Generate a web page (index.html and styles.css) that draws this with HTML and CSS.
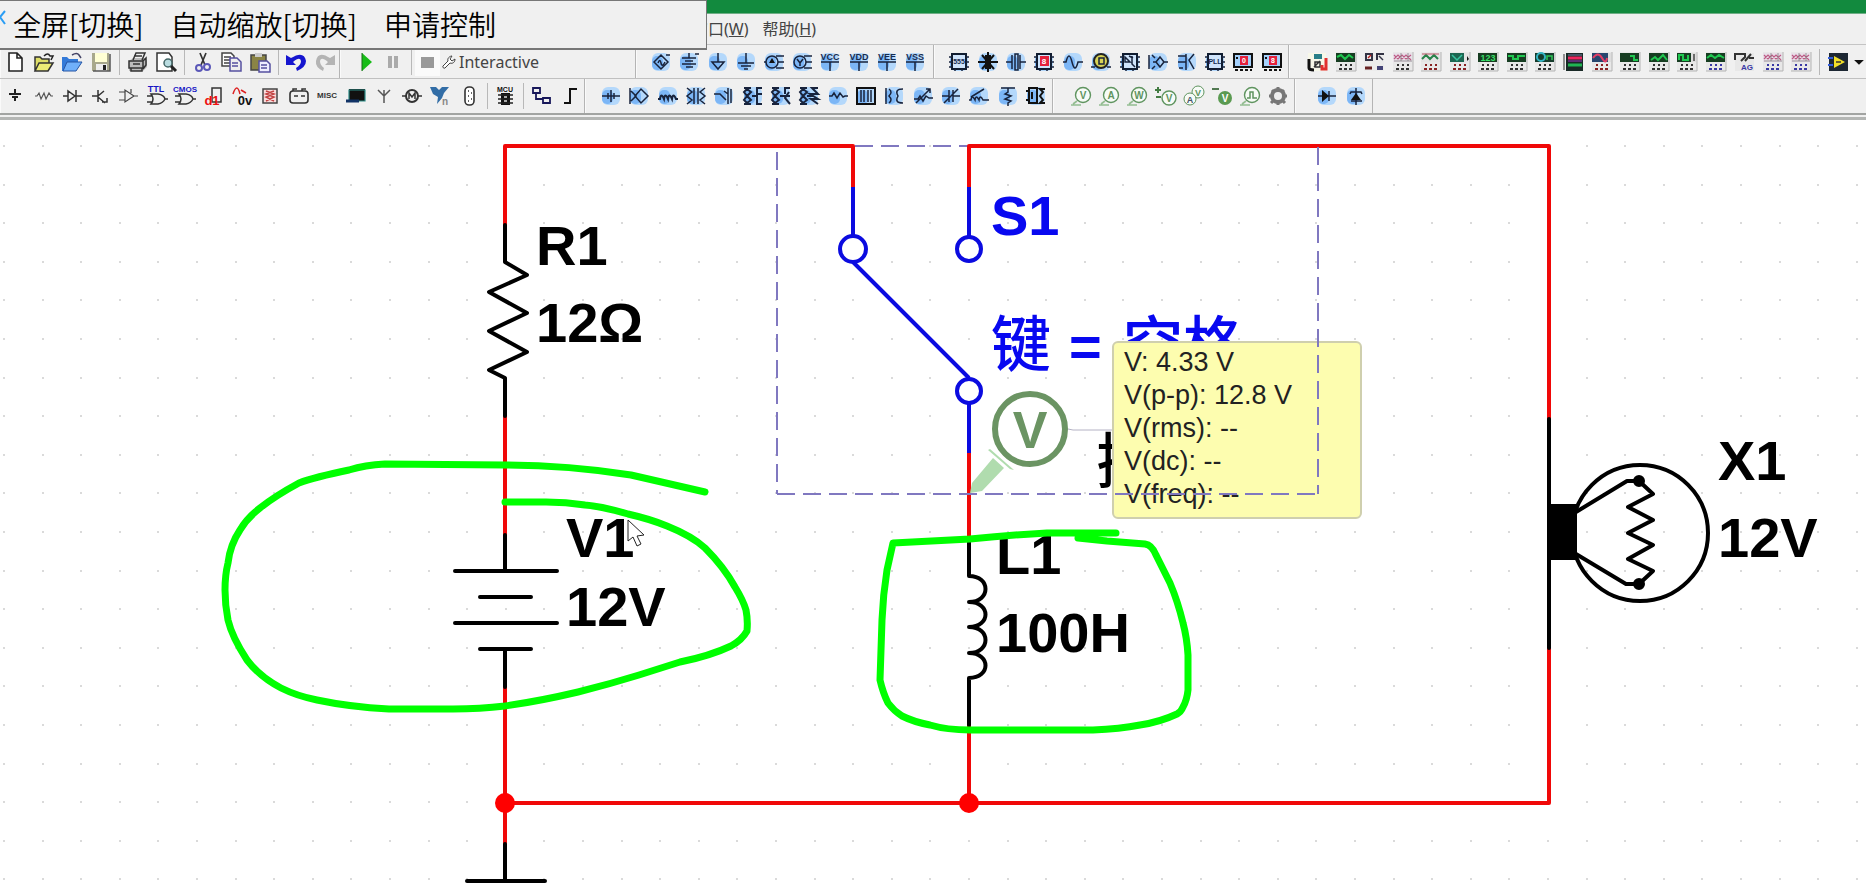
FILE: index.html
```html
<!DOCTYPE html>
<html lang="zh-CN">
<head>
<meta charset="utf-8">
<title>电路仿真</title>
<link rel="stylesheet" href="styles.css">
</head>
<body>
<header class="app-header">
  <div class="title-strip"></div>
  <nav class="menu-bar">
    <button class="menu-item" type="button">窗口(<u>W</u>)</button>
    <button class="menu-item" type="button">帮助(<u>H</u>)</button>
  </nav>
  <div class="tool-row tool-row-top">
    <div class="tool-section" data-tools="standard"></div>
    <div class="tool-section section-run">
      <div class="run-tools" data-tools="run"></div>
      <button class="mode-button" type="button">
        <svg class="wrench" viewBox="0 0 14 14"><path d="M1 11l5-5c-1-3 2-5 4-5l-2 3 2 2 3-2c0 3-2 5-5 4l-5 5c-1 1-3-1-2-2z" fill="#fff" stroke="#444"/></svg>
        Interactive
      </button>
    </div>
    <div class="tool-section section-power" data-tools="power"></div>
    <div class="tool-section section-misc" data-tools="misc"></div>
    <div class="tool-section section-instruments" data-tools="instruments"></div>
  </div>
  <div class="tool-row tool-row-bottom">
    <div class="tool-section" data-tools="components"></div>
    <div class="tool-section section-basic" data-tools="basic"></div>
    <div class="tool-section section-probes" data-tools="probes"></div>
    <div class="tool-section section-diodes" data-tools="diodes"></div>
    <div></div>
  </div>
  <div class="header-edge"></div>
  <div class="remote-bar">
    <svg class="remote-chevron" viewBox="0 0 6 16"><path d="M5 1L0 7l5 7" fill="none" stroke="#2a9df4" stroke-width="2"/></svg>
    <button class="remote-item" type="button">全屏[切换]</button>
    <button class="remote-item" type="button">自动缩放[切换]</button>
    <button class="remote-item" type="button">申请控制</button>
  </div>
</header>

<main>
<svg class="schematic" viewBox="0 120 1866 769" role="img" aria-label="电路原理图">
  <defs>
    <pattern id="grid" x="3" y="145" width="193" height="193" patternUnits="userSpaceOnUse">
      <g fill="#dadada">
        <path id="dot-row" d="M0 0h2v2h-2zM39 0h2v2h-2zM77 0h2v2h-2zM116 0h2v2h-2zM154 0h2v2h-2z"/>
        <use href="#dot-row" y="39"/><use href="#dot-row" y="77"/><use href="#dot-row" y="116"/><use href="#dot-row" y="154"/>
      </g>
    </pattern>
  </defs>
  <rect y="120" width="1866" height="769" fill="url(#grid)"/>

  <path class="bounds" d="M777 146H1318"/>

  <g class="wire">
    <path d="M505 225V146H853V187M969 187V146H1549V419M1549 648V803H505M505 416V535M505 687V844M969 453V541M969 725V803"/>
    <circle cx="505" cy="803" r="8"/><circle cx="969" cy="803" r="8"/>
  </g>

  <g class="part">
    <path d="M505 225V262L527 275 489 292 527 313 489 331 527 352 489 370 505 378V416"/>
    <path d="M505 535V571M455 571H557M480 597H531M455 623H557M480 649H531M505 649V687"/>
    <path d="M505 844V881M467 881H545"/>
    <path d="M969 541V576C991 576 991 602 969 602C991 602 991 627 969 627C991 627 991 653 969 653C991 653 991 678 969 678V725"/>
    <path d="M1549 419V648"/>
    <circle cx="1640" cy="533" r="68"/>
    <path d="M1549 504h28v56h-28z" fill="#000" stroke="none"/>
    <path d="M1576 512L1627 481H1639L1653 494 1628 507 1653 520 1628 533 1653 545 1628 559 1653 571 1639 584H1626L1576 554"/>
    <circle class="solid" cx="1639" cy="481" r="4"/><circle class="solid" cx="1639" cy="584" r="4"/>
  </g>

  <g class="switch">
    <path d="M853 187V236M969 187V236M853 262L969 378M969 404V453"/>
    <circle cx="853" cy="249" r="13"/><circle cx="969" cy="249" r="12"/><circle cx="969" cy="391" r="12"/>
  </g>

  <g class="label">
    <text x="536" y="265">R1</text><text x="536" y="342">12Ω</text>
    <text x="566" y="557">V1</text><text x="566" y="626">12V</text>
    <text x="996" y="574">L1</text><text x="996" y="652">100H</text>
    <text x="1718" y="480">X1</text><text x="1718" y="557">12V</text>
    <text class="label-cjk" x="1096" y="483">探</text>
  </g>
  <g class="label label-switch">
    <text x="991" y="235">S1</text>
    <text class="label-cjk" y="366"><tspan x="991">键</tspan><tspan class="equals" x="1069">=</tspan><tspan x="1123">空格</tspan></text>
  </g>

  <path d="M970 493l2-10 21-25 11 10-22 23zM990 449l24 21-4-1-22-19z" fill="#b0dcae"/>
  <circle class="probe-ring" cx="1030" cy="429" r="35"/>
  <text class="probe-letter" x="1030" y="448">V</text>
  <path d="M1068 429l5 1h40" fill="none" stroke="#b4b2c4"/>

  <rect x="1113" y="342" width="248" height="176" rx="5" fill="#fdfdaf" stroke="#cfcfae" stroke-width="2"/>
  <g class="readout">
    <text x="1124" y="371">V: 4.33 V</text>
    <text x="1124" y="404">V(p-p): 12.8 V</text>
    <text x="1124" y="437">V(rms): --</text>
    <text x="1124" y="470">V(dc): --</text>
    <text x="1124" y="503">V(freq): --</text>
  </g>
  <path class="bounds" d="M777 152V494M777 494H1318M1318 147V494"/>

  <g class="marker">
    <path d="M705 492L631 475Q567 465 505 465L385 464Q365 465 349 470Q315 477 299 483Q275 496 260 508Q247 518 240 530Q230 545 228 563Q225 575 225 590Q225 605 228 620Q232 637 247 660Q260 677 281 688Q297 696 317 700Q350 707 389 709H453Q480 709 505 706Q540 701 578 692Q610 684 639 675L680 662Q710 656 731 646Q742 640 747 631Q748 620 746 610Q743 600 735 587Q724 567 705 548Q692 536 667 526Q650 519 628 514Q600 506 585 505Q566 502 546 502H505"/>
    <path d="M1116 533H1047Q1010 535 970 539L893 543 887 570Q883 595 882 620L880 680Q883 693 888 703Q894 711 902 716Q914 722 930 725Q947 730 970 730H1093Q1120 729 1140 725Q1160 722 1177 714Q1181 712 1183 707Q1187 700 1188 690V655Q1187 638 1183 623Q1178 602 1170 583L1156 555Q1152 545 1145 544L1107 541 1078 538"/>
  </g>
  <path d="M628 520V541L633 537 637 546 641 544 637 536 644 535Z" fill="#fff" stroke="#222"/>
</svg>
</main>
<script src="toolbars.js"></script>
</body>
</html>
```
FILE: styles.css
```css
* { box-sizing: border-box; }
body {
  margin: 0;
  background: #fff;
  font-family: "Noto Sans", "Noto Sans CJK SC", sans-serif;
}
button {
  margin: 0;
  padding: 0;
  border: 0;
  background: none;
  color: inherit;
  font: inherit;
}
.app-header { position: relative; background: #f0f0f0; }
.title-strip { height: 14px; background: #128a3e; border-bottom: 1px solid #6fae86; }
.menu-bar {
  display: flex;
  align-items: center;
  gap: 14px;
  height: 31px;
  padding-left: 692px;
  color: #444;
  font-size: 16px;
  line-height: 20px;
  border-bottom: 1px solid #c4c4c4;
}
.tool-row { display: grid; height: 34px; }
.tool-row-top {
  grid-template-columns: 340fr 296fr 298fr 355fr 577fr;
  border-bottom: 1px solid #c0c0c0;
}
.tool-row-bottom { grid-template-columns: 585fr 468fr 242fr 78fr 493fr; }
.tool-section {
  display: flex;
  align-items: center;
  min-width: 0;
  border-right: 1px solid #b4b4b4;
  border-left: 1px solid #fafafa;
}
.section-run { padding-left: 11px; }
.section-power { padding: 0 4px 0 10px; }
.section-misc { padding: 0 2px 0 10px; }
.section-instruments { padding-left: 13px; border-right: 0; }
.section-basic { padding: 0 2px 0 11px; }
.section-probes { padding: 0 2px 0 13px; }
.section-diodes { padding: 0 2px 0 17px; }
.run-tools { display: flex; align-items: center; width: 90px; }
.mode-button {
  display: flex;
  align-items: center;
  gap: 3px;
  color: #444;
  font-size: 16px;
  line-height: 20px;
}
.wrench { width: 14px; height: 14px; }
.tool {
  display: flex;
  flex: 1 1 0;
  align-items: center;
  justify-content: center;
  min-width: 0;
  height: 28px;
}
.narrow { flex: 0 0 14px; }
.narrow .tool-icon { width: 14px; height: 14px; }
.tool-icon { flex: none; width: 20px; height: 20px; overflow: visible; }
.tool-icon text {
  font-family: "Liberation Sans", sans-serif;
  font-weight: bold;
  font-size: 8px;
  text-anchor: middle;
}
.divider { flex: none; width: 8px; height: 26px; }
.divider::before { content: ""; display: block; width: 1px; height: 26px; margin-left: 4px; background: #b8b8b8; }
.header-edge {
  height: 7px;
  border-top: 2px solid #a2a4a2;
  border-bottom: 3px solid #b4b6b4;
}
.remote-bar {
  position: absolute;
  top: 0;
  left: 0;
  display: flex;
  align-items: center;
  gap: 27px;
  width: 707px;
  height: 50px;
  padding: 0 0 2px 13px;
  border: solid #777;
  border-width: 1px 1px 2px 0;
  background: #f0f0f0;
  color: #000;
  font-family: "Noto Sans CJK SC", sans-serif;
  font-weight: 350;
  font-size: 28px;
  line-height: 40px;
}
.remote-chevron { position: absolute; top: 9px; left: 0; width: 6px; height: 16px; }
.schematic { display: block; width: 100%; height: auto; }
.wire path { fill: none; stroke: #f00808; stroke-width: 4; stroke-linejoin: round; }
.wire circle { fill: #f00; stroke: #f00; stroke-width: 4; }
.part { fill: none; stroke: #000; stroke-width: 4; stroke-linecap: round; stroke-linejoin: round; }
.part .solid { fill: #000; }
.switch { fill: none; stroke: #0b0be0; stroke-width: 4; }
.bounds { fill: none; stroke: #8078c0; stroke-width: 2; stroke-dasharray: 18 8; }
.label {
  fill: #000;
  font-family: "Liberation Sans", "Noto Sans CJK SC", sans-serif;
  font-weight: bold;
  font-size: 56px;
}
.label-cjk { font-family: "Noto Sans CJK SC", sans-serif; font-weight: 500; font-size: 60px; }
.equals { font-family: "Liberation Sans", sans-serif; font-weight: bold; font-size: 56px; }
.label-switch { fill: #0808f0; }
.probe-ring { fill: #fff; stroke: #6b9463; stroke-width: 6; }
.probe-letter {
  fill: #6b9463;
  font-family: "Liberation Sans", sans-serif;
  font-weight: bold;
  font-size: 52px;
  text-anchor: middle;
}
.readout { fill: #222; font-family: "Liberation Sans", sans-serif; font-size: 27px; }
.marker { fill: none; stroke: #0f0; stroke-width: 7; stroke-linecap: round; stroke-linejoin: round; }
```
FILE: toolbars.js
```js
// Shape helpers: every icon is drawn on a 20 x 20 grid.
const line = (d, color = "#18233c", width = 1.5) =>
  `<path d="${d}" fill="none" stroke="${color}" stroke-width="${width}"/>`;
const fill = (d, color = "#111") => `<path d="${d}" fill="${color}"/>`;
const word = (s, x, y, color = "#111", size = 8) =>
  `<text x="${x}" y="${y}" fill="${color}" style="font-size:${size}px">${s}</text>`;
const glow = (inner) =>
  `<rect x="1" y="1" width="18" height="18" rx="6" fill="#b4d8fb"/><rect x="1" y="4" width="11" height="14" rx="5" fill="#7cb6f6"/>${inner}`;

const meter = (screen, trace, feet = "#333") =>
  fill("M0 0h20v19H0z", "#e8e8e8") + line("M0 19h20V0", "#b4b4b4", 1) + fill("M0 1h19v9H0z", screen) + trace +
  line("M4 13h2m3 0h2m3 0h2M3 17h3m2 0h3m2 0h3", feet, 2);
const scope = (trace, feet) => meter("#173d22", line(trace, "#20c850", 2), feet);
const striped = (feet) =>
  meter("#e8dfe8", line("M1 3l4 4 4-4 4 4 5-4M1 7l4-4 4 4 4-4 5 5", "#bd5b85", 1.2) + line("M1 9h18M8 1v8M15 1v8", "#777", .7), feet);
const supply = (s) => glow(word(s, 10, 8, "#182c50", 9) + line("M1 10h18M10 10v9"));
const probe = (letter, green = "#5f945f") =>
  `<circle cx="12" cy="9" r="7.5" fill="#f7fbf7" stroke="${green}" stroke-width="1.4"/>` +
  line("M0 19h10M2 18l4-3", "#93bd91", 1.6) + word(letter, 12, 13, green, 10);
const chip = (inner) => glow(`<rect x="3" y="2" width="14" height="15" fill="#cfe4fb" stroke="#101c30" stroke-width="2"/>` +
  line("M0 5h3M0 10h3M0 15h3M17 5h3M17 10h3M17 15h3M6 17v2M13 17v2") + inner);
const display = (digit) => chip(fill("M6 4h9v10H6z", "#e4203c") + word(digit, 10, 12, "#fff", 8));
const panel = (digit) =>
  fill("M0 1h20v14H0z", "#a5d0fb") + line("M1 2h18v13H1z", "#111", 2) + fill("M7 4h8v9H7z", "#e4203c") +
  word(digit, 11, 11, "#fff", 7) + line("M2 18h3m2 0h3m2 0h3m2 0h2M3 6h2", "#111", 2);

const toolbars = {
  standard: [
    ["新建", fill("M4 1h8l5 5v13H4z", "#fff") + line("M4 1h8l5 5v13H4zM12 1v5h5", "#222", 1.6)],
    ["打开", line("M10 4q4-4 6 0h3l-2 4", "#222") + fill("M1 5h5l2 2h7v4H6L3 19H1z", "#dede66") + fill("M5 11h14l-5 8H1z", "#ecec76") + line("M1 19V5h5l2 2h7v4H5L1 19h13l5-8h-4", "#333")],
    ["打开样本", line("M10 3q5-3 7 0l2 3", "#446") + fill("M0 5h5l2 2h9v4H6L3 19H0z", "#337ad8") + fill("M5 10h15l-6 9H1z", "#70b0fa") + line("M5 10h15l-6 9H1z", "#2454a4", 1)],
    ["保存", fill("M1 1h17l1 18H1z", "#a8a88c") + fill("M4 1h12v9H4z", "#ffffd4") + fill("M5 12h11v7H5z", "#eee") + fill("M12 13h3v5h-3z", "#222") + line("M2 19h17V2", "#555")],
    null,
    ["打印", fill("M2 9l4-3h12l2 3v6l-4 4H2z", "#bbb") + line("M2 9h14v7H2zM6 8l3-7h9l-3 7M16 9l3-3v7l-3 4M4 16v3h11v-3M7 4h8M6 12h7", "#333")],
    ["预览", fill("M1 1h12l3 4v14H1z", "#fff") + line("M1 1h12l3 4v14H1z", "#333") + `<circle cx="12" cy="11" r="4" fill="#b9dce0" stroke="#466" stroke-width="1.5"/>` + line("M15 14l5 5", "#222", 3)],
    null,
    ["剪切", line("M7 1l5 12M13 1L8 13", "#333", 1.7) + `<g fill="none" stroke="#5b58b8" stroke-width="2"><circle cx="6" cy="16" r="3"/><circle cx="14" cy="15" r="3"/></g>`],
    ["复制", fill("M1 1h9l3 3v10H1z", "#fff") + line("M1 1h9l3 3v10H1zM3 5h7M3 8h6M3 11h6", "#444") + fill("M9 6h7l4 4v9H9z", "#eee") + line("M9 6h7l4 4v9H9zM11 11h6M11 14h6", "#5650a0")],
    ["粘贴", fill("M1 3h15v15H1z", "#8a8445") + line("M1 3h15v15H1z", "#444") + fill("M5 1h7v4H5z", "#ccc") + fill("M9 9h8l3 3v8H9z", "#eef") + line("M9 9h8l3 3v8H9zM11 13h6M11 16h6", "#5650a0")],
    null,
    ["撤销", fill("M0 3v10h10L7 10Q14 4 15 9q0 4-5 7l1 3q9-4 9-10Q18-2 5 6z", "#1515cf")],
    ["重做", fill("M20 3v10H10l3-3Q6 4 5 9q0 4 4 7l-1 3Q0 15 1 9 3-2 15 6z", "#b4b4b4")],
  ],
  run: [
    ["运行", fill("M6 1l10 9-10 9z", "#18bc18") + line("M6 1v18", "#176b17", 1)],
    ["暂停", fill("M5 4h4v12H5zM11 4h4v12h-4z", "#aaa")],
    null,
    ["停止", fill("M-3-3h25v27H-3z", "#fafafa") + fill("M3 5h13v11H3z", "#999")],
  ],
  power: [
    ["交流电源", glow(line("M3 10l7-7 7 7-7 7zM7 11q2-5 3 0t4-1M15 3h4"))],
    ["直流电源", glow(line("M3 6h14M6 9h8M3 12h14M7 15h7M10 1v5M16 2h4"))],
    ["数字地", glow(line("M10 1v9M4 10h12l-6 7z"))],
    ["接地", glow(line("M10 1v10M2 11h16M5 14h10M8 17h4"))],
    ["三相电源", glow(`<circle cx="8" cy="10" r="6" fill="none" stroke="#18233c" stroke-width="1.5"/>` + fill("M5 11l3-5 3 5z") + line("M12 4h8M14 10h6M12 16h8M0 10h2"))],
    ["三相星形电源", glow(`<circle cx="8" cy="10" r="6" fill="none" stroke="#18233c" stroke-width="1.5"/>` + line("M5 7l3 4 3-4M8 11v3M12 4h8M14 10h6M12 16h8"))],
    ["VCC", supply("VCC")], ["VDD", supply("VDD")], ["VEE", supply("VEE")], ["VSS", supply("VSS")],
  ],
  misc: [
    ["555", chip(word("555", 10, 12, "#152b50", 7))],
    ["芯片", glow(fill("M7 3h6v14H7z") + line("M4 3l12 14M16 3L4 17M0 10h20M10 0v20", "#111", 2))],
    ["晶振", glow(line("M0 10h6M14 10h6M6 3v14M14 3v14M9 2h3v16H9z"))],
    ["数码管", display("8")],
    ["正弦", glow(line("M0 10h3q3-12 6 0t6 0h5"))],
    ["电机", glow(`<circle cx="10" cy="9" r="7" fill="#d8d456" stroke="#222" stroke-width="2"/>` + line("M0 15h4M16 15h4M8 6h5v6H8z"))],
    ["光耦", chip(line("M5 5l5 5H5zM12 4v8l3 3M9 4l4 2"))],
    ["灯", glow(line("M1 3v14M5 10h3l4-5 4 5-4 5-4-5M16 10h4M4 3l3 3M4 17l3-3"))],
    ["晶体管", glow(line("M1 4h8M1 10h8M9 2v16M17 2l-5 6 5 9M2 16h4"))],
    ["PLL", chip(word("PLL", 10, 12, "#152b50", 7))],
    ["显示器甲", panel("0")], ["显示器乙", panel("8")],
  ],
  instruments: [
    ["万用表", fill("M1 1h18v18H1z", "#f7f7e8") + fill("M7 2h8v5H7z", "#287e88") + line("M2 7v9q0 2 5 2", "#111", 3) + line("M7 15l6-6M8 10h5v5H8z", "#333") + line("M19 6v11h-4v-4", "#e12f2f", 3)],
    ["函数发生器", scope("M1 5l4-2 4 4 4-4 4 3")],
    ["瓦特表", fill("M0 1h20v18H0z", "#ececec") + line("M2 2h6v6H2zM13 8V2h7", "#334", 2) + line("M4 6l3-3", "#b22") + line("M15 4l4 4", "#334") + line("M1 16h7", "#622", 3) + line("M13 16h6", "#447", 4)],
    ["示波器", striped("#333")],
    ["四通道示波器", meter("#e4e4e4", line("M1 7l4-4 4 4 4-4 4 4", "#28834a", 2) + line("M1 2h17", "#b56", 1), "#822")],
    ["波特测试仪", meter("#e4e4e4", fill("M0 1h14v9H0z", "#1c6651") + line("M2 3l5 5 5-5", "#38c4a0") + fill("M17 4l2 3-2 2z"), "#822")],
    ["频率计", meter("#163c20", word("123", 10, 9, "#39de68", 9))],
    ["字发生器", scope("M1 4h5v3h5V4h7")],
    ["逻辑转换器", meter("#163c2c", `<circle cx="6" cy="5" r="4" fill="none" stroke="#35b5c4" stroke-width="2"/>` + line("M12 8V4h5v4", "#30c657"))],
    ["逻辑分析仪", fill("M3 1h17v18H3z", "#192a27") + line("M5 3h14", "#456", 2) + line("M5 6h14", "#ee265f", 3) + line("M5 9h14", "#a030c0", 1) + line("M5 13h14", "#20b553", 3) + line("M1 2v16", "#333", 1)],
    ["伏安分析仪", meter("#27466e", line("M1 6q5-7 9 0t5 0", "#e33e64", 2) + fill("M16 1h3v9h-3z", "#ddd"), "#822")],
    ["失真分析仪", scope("M10 4h4v4h4")], ["频谱分析仪", scope("M2 8l4-3 3 3 5-5 4 5")],
    ["网络分析仪", meter("#ddd", fill("M0 1h14v9H0z", "#173d22") + line("M2 8V3h4v5h5V3", "#20c850", 2) + line("M17 2v7", "#444"))],
    ["安捷伦函数发生器", scope("M1 6l4-3 4 3 4-3 5 3", "#3a39a4")],
    ["安捷伦万用表", fill("M1 1h19v18H1z", "#e8e8e8") + line("M1 8V2h10v3l-4 4M11 9l6-7M15 6h5", "#333", 2) + word("AG", 13, 18, "#3a39a4", 8)],
    ["安捷伦示波器", striped("#3a39a4")], ["泰克示波器", striped("#3a39a4")],
    null,
    ["虚拟仪器", fill("M1 1h19v18H1z", "#1d2733") + fill("M6 4l11 6-11 6z", "#f1df28") + line("M0 6h5M0 13h5", "#325cda", 2) + line("M8 10h5", "#333")],
    ["更多", fill("M3 7h14l-7 7z"), "narrow"],
  ],
  components: [
    ["电源", line("M10 3v4M4 8h12M7 11h6M10 11v4", "#222", 2)],
    ["基本元件", line("M1 10h2l2-3 2 6 3-6 2 6 3-6 2 3h2", "#555", 1.2)],
    ["二极管", line("M1 10h5M6 5v10l7-5zM14 4v12M14 10h6", "#333")],
    ["晶体管", line("M2 10h6M8 4v12M8 10l6-5M8 11l7 6M12 16h5v-4", "#333")],
    ["模拟器件", line("M6 4v12l9-6zM0 6h6M0 14h6M15 10h4M12 3v4", "#444", 1.2)],
    ["TTL", word("TTL", 9, 6, "#1717c5", 9) + line("M4 8h7q6 1 7 5-2 4-7 5H4q4-5 0-10zM0 10h5M0 16h5M18 13h3", "#333")],
    ["CMOS", word("CMOS", 10, 6, "#1717c5", 8) + line("M4 8h7q6 1 7 5-2 4-7 5H4q4-5 0-10zM0 10h5M0 16h5M18 13h3", "#333")],
    ["其他数字器件", line("M8 2h9v14H8z", "#333") + word("d1", 8, 19, "#e11", 13)],
    ["混合器件", line("M1 8q4-12 7 0M9 4l5 3", "#d22") + word("0v", 13, 19, "#111", 13)],
    ["指示器", `<rect x="3" y="3" width="14" height="14" fill="#fadddd" stroke="#444" stroke-width="1.5"/>` + line("M6 5l8 3-8 3 8 4M14 5L6 8l8 3-8 4", "#c34444")],
    ["功率器件", `<rect x="1" y="5" width="18" height="12" rx="3" fill="none" stroke="#333" stroke-width="1.6"/>` + line("M5 10h4M12 10h4M4 5V3h4M13 5V3h4", "#333")],
    ["MISC", word("MISC", 10, 12, "#333", 8)],
    ["外围设备", fill("M4 3h16v12H4z") + line("M4 4h16v11H4z", "#2b8b86", 1.2) + line("M1 15h13", "#136", 3)],
    ["射频", line("M10 4v13M4 4l6 6 6-6", "#555", 1.5)],
    ["机电", `<circle cx="10" cy="10" r="6" fill="none" stroke="#333" stroke-width="2"/>` + line("M0 10h4M16 10h4M7 13V7l3 4 3-4v6", "#333")],
    ["NI", fill("M0 1h6l3 3 3-3h7l-5 6-2 5-5 6 1-7-5-3z", "#326da6") + word("n", 15, 19, "#888", 10)],
    ["连接器", `<rect x="6" y="1" width="9" height="18" rx="4" fill="#fff" stroke="#333" stroke-width="1.6"/>` + line("M9 5h1M9 10h1M9 15h1M12 7h1M12 13h1", "#333")],
    null,
    ["MCU", word("MCU", 10, 6, "#111", 7) + fill("M6 7h9v12H6z") + line("M3 9h15M3 13h15M3 17h15", "#222") + line("M9 11h3M9 15h3", "#ddd")],
    null,
    ["层次块", line("M2 2h7v5H2zM12 12h7v5h-7zM5 7v6h7", "#17175a", 1.8)],
    ["总线", line("M4 17h6V3h7", "#111", 2)],
  ],
  basic: [
    ["电容", glow(line("M1 10h18M10 4v12M7 7v6M13 7v6"))],
    ["二极管桥", glow(line("M1 2v16M2 5l5 5-5 5M6 10l6-7 7 7-7 7z"))],
    ["电感", glow(line("M0 13h2q1-7 4 0 1-7 4 0 1-7 4 0 1-7 4 0h2", "#18233c", 2))],
    ["变压器", glow(line("M1 2l5 4-5 4 5 4-5 4M8 2v16M12 2v16M19 2l-5 4 5 4-5 4 5 4"))],
    ["开关", glow(line("M0 8h6l6 6M14 2v16M10 5l4 3M17 3v14"))],
    ["继电器甲", glow(line("M1 2h7M1 18h7M4 3l4 3-4 4 4 4-4 3M4 3L1 6l3 4-3 4 3 3M19 2h-5v6h5M14 8v10h5M9 10h5", "#18233c", 2))],
    ["继电器乙", glow(line("M1 2h7M1 18h7M4 3l4 3-4 4 4 4-4 3M4 3L1 6l3 4-3 4 3 3M19 2h-5v6M18 6l-4 6 5 6M9 10h10", "#18233c", 2))],
    ["继电器丙", glow(line("M1 2h7M1 18h7M4 3l4 3-4 4 4 4-4 3M4 3L1 6l3 4-3 4 3 3M19 2h-6l6 6h-8l8 5h-7l7 5M8 10h6", "#18233c", 2))],
    ["电阻", glow(line("M1 10h3l2-3 3 5 3-5 3 4 2-1h3"))],
    ["电阻排", glow(line("M1 2h18v16H1z", "#111", 2) + line("M5 4v12M8 4v12M12 4v12M15 4v12"))],
    ["耦合电感", glow(line("M2 2v16M5 3q4 3 0 7 4 4 0 7M19 3q-9 0-5 7-4 7 5 7"))],
    ["电位器", glow(line("M1 13h4l2-3 3 5 3-5 3 2h4M3 17L17 3M13 3h4v4"))],
    ["可变电容", glow(line("M1 10h7M8 4v12M12 4v12M12 10h7M3 17L17 3"))],
    ["可变电感", glow(line("M0 14h2q1-6 4 0 1-6 4 0 1-6 4 0h6M2 11L15 3"))],
    ["上拉电阻", glow(line("M3 2h14M10 2v4l-3 2 6 2-6 3 6 2-3 2v3"))],
    ["磁芯", glow(line("M3 2h8v15H3zM0 5h3M0 14h3M6 6v7M19 3h-5l3 3-3 4 3 4-3 3h5", "#111", 2))],
  ],
  probes: [
    ["电压探针", probe("V")], ["电流探针", probe("A")], ["功率探针", probe("W")],
    ["差分探针", `<circle cx="14" cy="12" r="7" fill="#f7fbf7" stroke="#5f945f" stroke-width="1.4"/>` + word("V", 14, 16, "#5f945f", 10) + line("M0 4h6M3 1v6M1 11h5", "#437c43", 2)],
    ["电压电流探针", `<circle cx="14" cy="6" r="6" fill="#f7fbf7" stroke="#5f945f"/>` + word("V", 14, 10, "#5f945f", 9) + `<circle cx="6" cy="13" r="6" fill="#f7fbf7" stroke="#5f945f"/>` + word("A", 6, 17, "#456", 9)],
    ["参考探针", `<circle cx="13" cy="12" r="7" fill="#5a9a51"/>` + word("V", 13, 16, "#fff", 10) + line("M0 3h7", "#527952", 2)],
    ["数字探针", probe("") + line("M7 12h3V6h3v6h4", "#5f945f")],
    ["探针设置", `<circle cx="10" cy="10" r="6" fill="#eee" stroke="#777" stroke-width="4"/>` + line("M10 1v3M10 16v3M1 10h3M16 10h3M4 4l2 2M14 14l3 3M16 4l-2 2M6 14l-3 3", "#777", 3)],
  ],
  diodes: [
    ["二极管", glow(line("M1 10h18M12 5v10") + fill("M5 4v12l7-6z"))],
    ["稳压管", glow(line("M10 2v17M4 8l1-2h10l1 2M5 15h11") + fill("M5 14h10l-5-7z"))],
  ],
};

for (const host of document.querySelectorAll("[data-tools]")) {
  host.innerHTML = toolbars[host.dataset.tools].map((tool) => tool
    ? `<button class="tool ${tool[2] || ""}" type="button" aria-label="${tool[0]}"><svg class="tool-icon" viewBox="0 0 20 20">${tool[1]}</svg></button>`
    : `<span class="divider"></span>`).join("");
}
```
